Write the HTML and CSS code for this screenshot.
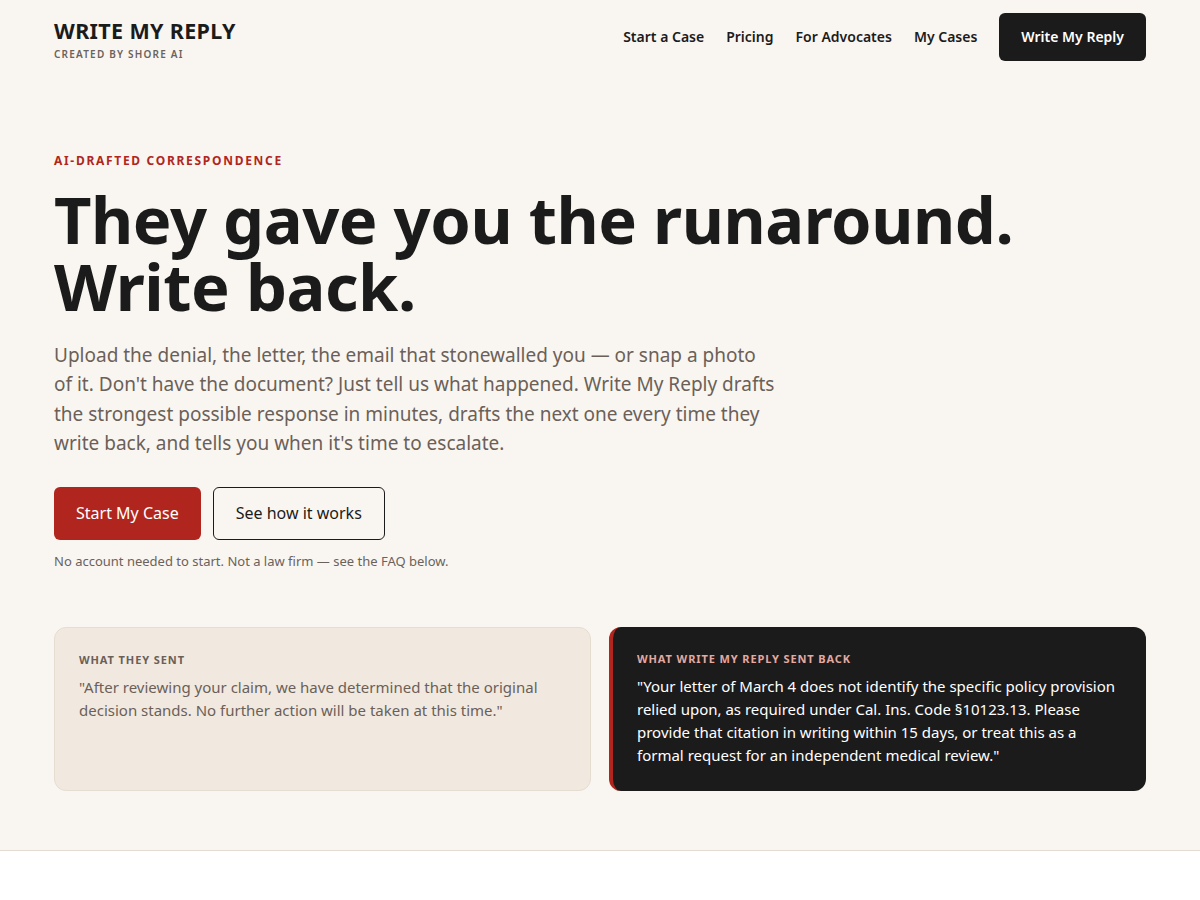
FILE: index.html
```html
<!DOCTYPE html>
<html lang="en">
  <head>
    <meta charset="UTF-8" />
    <meta name="viewport" content="width=device-width, initial-scale=1.0" />
    <title>Write My Reply</title>
    <link rel="stylesheet" href="styles.css">
  </head>
  <body>
    <section class="hero-wrap">
      <header class="header">
        <div class="logo">
          <div class="logo-name">WRITE MY REPLY</div>
          <div class="logo-sub">CREATED BY SHORE AI</div>
        </div>
        <nav class="nav">
          <a href="#">Start a Case</a>
          <a href="#">Pricing</a>
          <a href="#">For Advocates</a>
          <a href="#">My Cases</a>
          <a href="#" class="nav-btn">Write My Reply</a>
        </nav>
      </header>

      <div class="hero">
        <div class="eyebrow">AI-DRAFTED CORRESPONDENCE</div>
        <h1 class="title">They gave you the runaround.<br>Write back.</h1>
        <p class="lead">Upload the denial, the letter, the email that stonewalled you — or snap a photo of it. Don't have the document? Just tell us what happened. Write My Reply drafts the strongest possible response in minutes, drafts the next one every time they write back, and tells you when it's time to escalate.</p>
        <div class="actions">
          <a href="#" class="btn btn-red">Start My Case</a>
          <a href="#" class="btn btn-outline">See how it works</a>
        </div>
        <p class="note">No account needed to start. Not a law firm — see the FAQ below.</p>

        <div class="cards">
          <div class="card card-light">
            <div class="card-label">WHAT THEY SENT</div>
            <p class="card-text">"After reviewing your claim, we have determined that the original decision stands. No further action will be taken at this time."</p>
          </div>
          <div class="card card-dark">
            <div class="card-label">WHAT WRITE MY REPLY SENT BACK</div>
            <p class="card-text">"Your letter of March 4 does not identify the specific policy provision relied upon, as required under Cal. Ins. Code §10123.13. Please provide that citation in writing within 15 days, or treat this as a formal request for an independent medical review."</p>
          </div>
        </div>
      </div>
    </section>
  </body>
</html>
```

FILE: styles.css
```css
* {
  box-sizing: border-box;
}
body {
  margin: 0;
  background: #fff;
  font-family: "Noto Sans", "Open Sans", sans-serif;
  color: #1c1b1b;
}
a {
  text-decoration: none;
  color: inherit;
}
.hero-wrap {
  background: #f9f6f1;
  border-bottom: 1px solid #e4dcd3;
  padding: 0 54px 59px;
}

/* 헤더 */
.header {
  display: flex;
  justify-content: space-between;
  align-items: center;
  padding-top: 13px;
  height: 61px;
}
.logo-name {
  font-size: 21.5px;
  font-weight: 700;
  line-height: 26px;
  letter-spacing: 0.35px;
  color: #1c1b1b;
  margin-top: 4px;
}
.logo-sub {
  font-size: 10px;
  font-weight: 600;
  letter-spacing: 1.2px;
  color: #6b625b;
  margin-top: 3px;
}
.nav {
  display: flex;
  align-items: center;
  gap: 22px;
  font-size: 14px;
  font-weight: 600;
}
.nav a {
  padding-bottom: 2px;
}
.nav .nav-btn {
  background: #1c1b1b;
  color: #fff;
  height: 48px;
  padding: 0 22px 2px;
  border-radius: 6px;
  display: flex;
  align-items: center;
}

/* 히어로 */
.hero {
  padding-top: 91px;
}
.eyebrow {
  color: #b0261e;
  font-size: 12px;
  font-weight: 700;
  letter-spacing: 1.7px;
}
.title {
  margin: 17px 0 0;
  font-size: 65px;
  line-height: 67px;
  font-weight: 700;
  letter-spacing: -0.45px;
  color: #1c1b1b;
}
.lead {
  margin: 21px 0 0;
  max-width: 722px;
  font-size: 19px;
  line-height: 29.3px;
  color: #6b6058;
}
.actions {
  display: flex;
  gap: 12px;
  margin-top: 29px;
}
.btn {
  height: 53px;
  display: flex;
  align-items: center;
  padding: 0 22px 2px;
  border-radius: 6px;
  font-size: 16px;
}
.btn-red {
  background: #b0261e;
  color: #fff;
}
.btn-outline {
  border: 1px solid #1c1b1b;
  color: #1c1b1b;
}
.note {
  margin: 12px 0 0;
  font-size: 13px;
  color: #6b625b;
}

/* 카드 */
.cards {
  display: grid;
  grid-template-columns: 1fr 1fr;
  gap: 18px;
  margin-top: 57px;
}
.card {
  border-radius: 12px;
  padding: 24px 24px 22px;
  min-height: 164px;
}
.card-light {
  background: #f1e9e0;
  border: 1px solid #e6ddd1;
}
.card-dark {
  background: #1c1b1b;
  border-left: 4px solid #b0261e;
  color: #fff;
}
.card-label {
  font-size: 11px;
  font-weight: 700;
  letter-spacing: 0.9px;
  color: #6b5f57;
}
.card-dark .card-label {
  color: #e4a9a0;
}
.card-text {
  margin: 9px 0 0;
  font-size: 15px;
  line-height: 23px;
  color: #6b6058;
}
.card-dark .card-text {
  color: #fff;
}
```
